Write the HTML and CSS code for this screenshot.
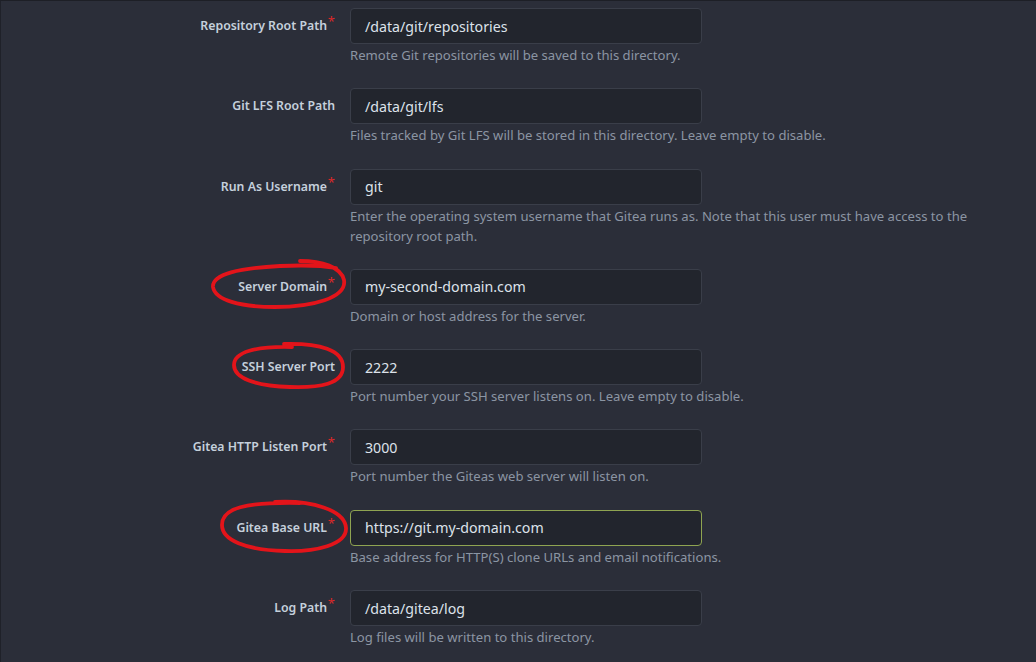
FILE: index.html
```html
<!DOCTYPE html>
<html>
<head>
<meta charset="utf-8">
<link rel="stylesheet" href="styles.css">
</head>
<body>
<div class="page">
  <form class="form">
    <div class="row">
      <label class="label required">Repository Root Path</label>
      <div class="field">
        <div class="input">/data/git/repositories</div>
        <div class="help">Remote Git repositories will be saved to this directory.</div>
      </div>
    </div>
    <div class="row">
      <label class="label">Git LFS Root Path</label>
      <div class="field">
        <div class="input">/data/git/lfs</div>
        <div class="help">Files tracked by Git LFS will be stored in this directory. Leave empty to disable.</div>
      </div>
    </div>
    <div class="row">
      <label class="label required">Run As Username</label>
      <div class="field">
        <div class="input">git</div>
        <div class="help">Enter the operating system username that Gitea runs as. Note that this user must have access to the repository root path.</div>
      </div>
    </div>
    <div class="row">
      <label class="label required">Server Domain</label>
      <div class="field">
        <div class="input">my-second-domain.com</div>
        <div class="help">Domain or host address for the server.</div>
      </div>
    </div>
    <div class="row">
      <label class="label">SSH Server Port</label>
      <div class="field">
        <div class="input">2222</div>
        <div class="help">Port number your SSH server listens on. Leave empty to disable.</div>
      </div>
    </div>
    <div class="row">
      <label class="label required">Gitea HTTP Listen Port</label>
      <div class="field">
        <div class="input">3000</div>
        <div class="help">Port number the Giteas web server will listen on.</div>
      </div>
    </div>
    <div class="row">
      <label class="label required">Gitea Base URL</label>
      <div class="field">
        <div class="input focus">https://git.my-domain.com</div>
        <div class="help">Base address for HTTP(S) clone URLs and email notifications.</div>
      </div>
    </div>
    <div class="row">
      <label class="label required">Log Path</label>
      <div class="field">
        <div class="input">/data/gitea/log</div>
        <div class="help">Log files will be written to this directory.</div>
      </div>
    </div>
  </form>
  <svg class="marks" width="1036" height="662" viewBox="0 0 1036 662">
    <g fill="none" stroke="#e3141a" stroke-width="3.8" stroke-linecap="round" stroke-linejoin="round">
      <path d="M300,261 C322,261 341,267 344,280 C347,298 312,307 275,307 C240,307 215,300 213,287 C212,274 240,268 280,266 C302,265 320,265 336,268"/>
      <path d="M284,344 C320,343 343,350 343,367 C343,384 320,388 290,387 C255,386 234,378 234,365 C234,352 256,346 292,347"/>
      <path d="M275,502 C311,500 345,510 346,528 C347,545 315,552 285,551 C245,550 222,540 222,525 C222,508 245,502 300,503"/>
    </g>
  </svg>
</div>
</body>
</html>
```
FILE: styles.css
```css
html, body {
  margin: 0;
  padding: 0;
}
body {
  background: #2b2e39;
  width: 1036px;
  height: 662px;
  overflow: hidden;
  font-family: "Noto Sans", "Liberation Sans", sans-serif;
  box-sizing: border-box;
  border-top: 1px solid #1d1f26;
  border-left: 1px solid #1f2129;
}
.page {
  position: relative;
  height: 100%;
}
.form {
  display: flex;
  flex-direction: column;
  padding-top: 7px;
}
.row {
  display: grid;
  grid-template-columns: 334px 630px;
  column-gap: 15px;
  margin-bottom: 23.3px;
}
.label {
  justify-self: end;
  align-self: start;
  margin-top: 9px;
  font-size: 12.3px;
  font-weight: 600;
  color: #c5d0dc;
  line-height: 18px;
  position: relative;
}
.label.required {
  padding-right: 8px;
}
.label.required::after {
  content: "*";
  color: #db2828;
  position: absolute;
  right: 0;
  top: -5px;
  font-size: 13px;
  font-weight: 400;
}
.field {
  display: flex;
  flex-direction: column;
}
.input {
  box-sizing: border-box;
  width: 352px;
  height: 36px;
  background: #22252d;
  border: 1px solid #3a3e49;
  border-radius: 4px;
  padding: 0 14px;
  display: flex;
  align-items: center;
  font-size: 14.2px;
  color: #dde2ea;
}
.input.focus {
  border-color: #8fa451;
}
.help {
  margin-top: 1px;
  font-size: 13.1px;
  line-height: 20px;
  color: #8b95a3;
}
.marks {
  position: absolute;
  left: -1px;
  top: -1px;
  pointer-events: none;
}
```
